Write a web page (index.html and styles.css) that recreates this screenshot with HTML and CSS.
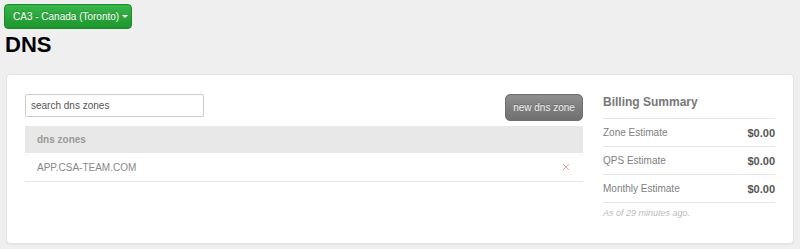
FILE: index.html
```html
<!DOCTYPE html>
<html>
<head>
<meta charset="utf-8">
<link rel="stylesheet" href="styles.css">
</head>
<body>
<div class="topbar">
  <button class="region-btn">CA3 - Canada (Toronto) <span class="caret"></span></button>
</div>
<h1 class="page-title">DNS</h1>
<div class="card">
  <div class="main-col">
    <div class="toolbar">
      <input class="search" type="text" value="search dns zones">
      <button class="new-btn">new dns zone</button>
    </div>
    <div class="zone-table">
      <div class="zone-head">dns zones</div>
      <div class="zone-row">
        <span class="zone-name">APP.CSA-TEAM.COM</span>
        <svg class="zone-del" width="8" height="8" viewBox="0 0 8 8"><path d="M1 1L7 7M7 1L1 7" stroke="#eba3a3" stroke-width="1" fill="none"/></svg>
      </div>
    </div>
  </div>
  <div class="side-col">
    <div class="bill-title">Billing Summary</div>
    <div class="bill-row"><span class="bill-label">Zone Estimate</span><span class="bill-val">$0.00</span></div>
    <div class="bill-row"><span class="bill-label">QPS Estimate</span><span class="bill-val">$0.00</span></div>
    <div class="bill-row"><span class="bill-label">Monthly Estimate</span><span class="bill-val">$0.00</span></div>
    <div class="bill-note">As of 29 minutes ago.</div>
  </div>
</div>
</body>
</html>
```
FILE: styles.css
```css
* { box-sizing: border-box; }
html, body { margin: 0; padding: 0; }
body {
  background: #efefef;
  font-family: "Liberation Sans", Arial, sans-serif;
  width: 800px;
  height: 249px;
  overflow: hidden;
}
.topbar { padding: 4px 0 0 4px; height: 29px; }
.region-btn {
  display: flex;
  align-items: center;
  height: 25px;
  width: 128px;
  padding: 0 0 0 8px;
  border: 1px solid #1d8a2a;
  border-radius: 4px;
  background: linear-gradient(#38b64a, #1c962d);
  color: #fff;
  font-family: "Liberation Sans", Arial, sans-serif;
  font-size: 10px;
  text-shadow: 0 -1px 0 rgba(0,0,0,0.2);
  white-space: nowrap;
}
.caret {
  display: inline-block;
  width: 0; height: 0;
  margin-left: 3px;
  border-left: 3px solid transparent;
  border-right: 3px solid transparent;
  border-top: 3px solid #fff;
}
.page-title {
  margin: 3px 0 0 5px;
  font-size: 22px;
  line-height: 26px;
  font-weight: bold;
  color: #000;
  height: 26px;
}
.card {
  margin: 16px 6px 0 6px;
  height: 170px;
  background: #fff;
  border: 1px solid #e2e2e2;
  border-radius: 4px;
  box-shadow: 0 1px 1px rgba(0,0,0,0.05);
  padding: 19px 18px 0 18px;
  display: flex;
  gap: 20px;
}
.main-col { width: 558px; }
.toolbar {
  display: flex;
  justify-content: space-between;
  align-items: flex-start;
  height: 27px;
  margin-bottom: 5px;
}
.search {
  width: 179px;
  height: 23px;
  border: 1px solid #ccc;
  border-radius: 2px;
  padding: 0 5px;
  font-family: "Liberation Sans", Arial, sans-serif;
  font-size: 10px;
  color: #555;
  outline: none;
}
.new-btn {
  width: 78px;
  height: 27px;
  border: 1px solid #6d6d6d;
  border-radius: 5px;
  background: linear-gradient(#8e8e8e, #707070);
  color: #f2f2f2;
  font-family: "Liberation Sans", Arial, sans-serif;
  font-size: 10px;
  padding: 0;
  text-shadow: 0 -1px 0 rgba(0,0,0,0.25);
}
.zone-head {
  height: 27px;
  background: #e8e8e8;
  display: flex;
  align-items: center;
  padding-left: 12px;
  font-size: 10px;
  font-weight: bold;
  color: #999;
}
.zone-row {
  height: 29px;
  border-bottom: 1px solid #e6e6e6;
  display: flex;
  align-items: center;
  justify-content: space-between;
  padding: 0 13px 0 12px;
  font-size: 10px;
  color: #888;
}
.zone-del { display: block; }
.side-col { width: 172px; }
.bill-title {
  font-size: 12px;
  font-weight: bold;
  color: #777;
  line-height: 16px;
  padding-bottom: 8px;
  border-bottom: 1px solid #e6e6e6;
}
.bill-row {
  height: 28px;
  border-bottom: 1px solid #e6e6e6;
  display: flex;
  align-items: center;
  justify-content: space-between;
}
.bill-label { font-size: 10px; color: #808080; }
.bill-val { font-size: 11px; font-weight: bold; color: #555; }
.bill-note {
  margin-top: 3px;
  font-size: 9px;
  line-height: 14px;
  font-style: italic;
  color: #bbb;
}
```
